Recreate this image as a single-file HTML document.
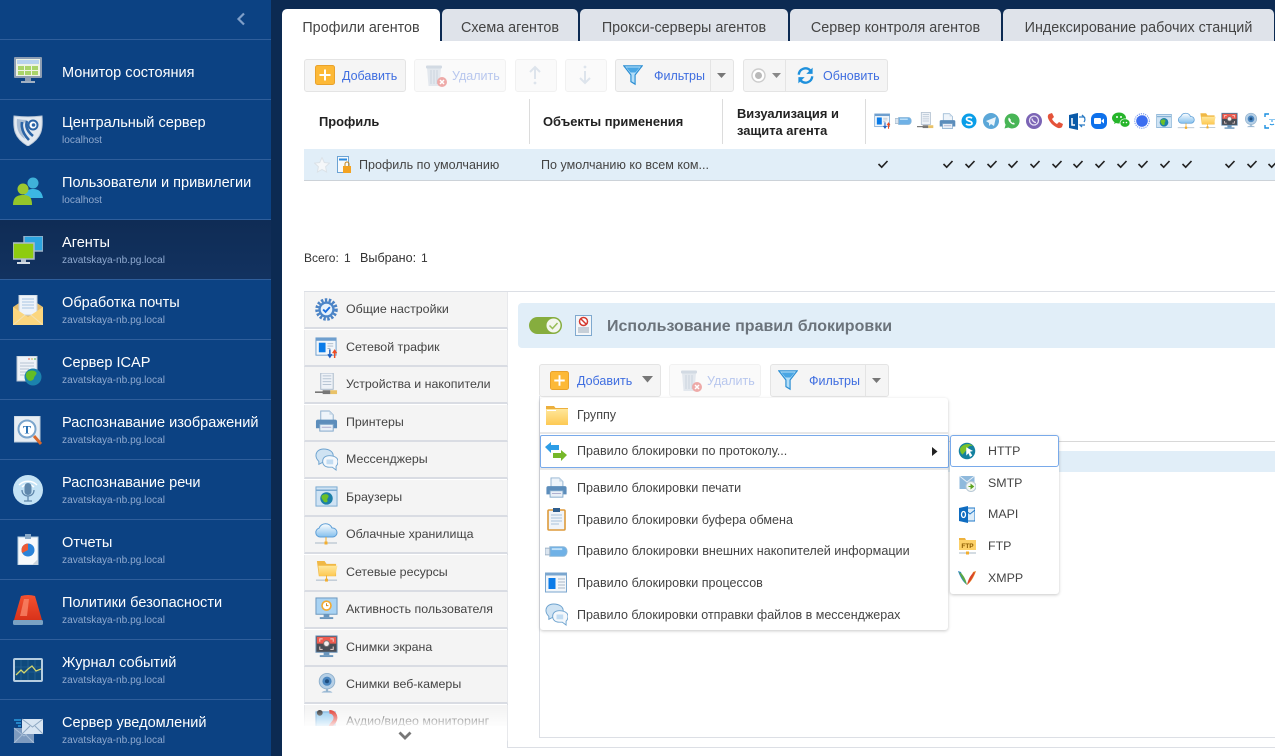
<!DOCTYPE html>
<html lang="ru"><head><meta charset="utf-8"><title>Агенты</title>
<style>
html,body{margin:0;padding:0}
body{width:1275px;height:756px;overflow:hidden;position:relative;background:#0c2a52;font-family:"Liberation Sans","DejaVu Sans",sans-serif;color:#444}
.a,.t,svg.i,.si{position:absolute}
.t{white-space:nowrap;line-height:20px}
.n{font-size:14.55px;color:#fff;left:62px;margin-top:2px}
.s{font-size:10.15px;color:#8fa9cf;left:62px;margin-top:2px}
.sep{position:absolute;left:0;width:271px;height:1px;background:#2f5e9b}
.tab{position:absolute;top:9px;height:32px;background:#dfe3ea;border-radius:5px 5px 0 0;text-align:center;font-size:14.35px;line-height:37px;padding-top:1px;box-sizing:border-box;color:#444;white-space:nowrap}
.btn{position:absolute;height:31px;background:#f5f5f5;border:1px solid #e4e4e4;border-radius:3px;box-sizing:content-box}
.dis{background:#fafafa;border-color:#f1f1f1}
.bl{color:#3f6ee0;font-size:12.5px;margin-top:1px}
.dt{color:#b8c7ee;font-size:12.5px;margin-top:1px}
.h{font-size:12.9px;font-weight:bold;color:#222;margin-top:2px}
.li{position:absolute;left:304px;width:202px;height:35px;background:#f4f4f4;border:1px solid #e8e9ec;border-bottom:2px solid #d9dce3;border-top:none;box-sizing:content-box}
.lt{left:346px;font-size:12.4px;color:#444}
.m{left:577px;font-size:12.55px;color:#444}
.c{position:absolute;top:158px;width:12px;height:12px}
</style></head><body>
<svg width="0" height="0" style="position:absolute">
<defs>
<linearGradient id="gc" x1="0" y1="0" x2="0" y2="1"><stop offset="0" stop-color="#fff"/><stop offset="1" stop-color="#84c0ee"/></linearGradient>
<linearGradient id="gy" x1="0" y1="0" x2="0" y2="1"><stop offset="0" stop-color="#ffe79b"/><stop offset="1" stop-color="#fdc954"/></linearGradient>
<linearGradient id="gr" x1="0" y1="0" x2="0" y2="1"><stop offset="0" stop-color="#f4512f"/><stop offset="1" stop-color="#d8321a"/></linearGradient>
<symbol id="plus" viewBox="0 0 20 20"><rect x=".5" y=".5" width="19" height="19" rx="2" fill="#fdb937" stroke="#e9a22b"/><path d="M10 4.500v11M4.500 10h11" stroke="#fff" stroke-width="2"/></symbol>
<symbol id="trash" viewBox="0 0 24 24"><path d="M3 5h14l-1.500 18H4.500z" fill="#e3e8ee"/><rect x="2" y="2.500" width="16" height="3" rx="1" fill="#d2dae3"/><path d="M7 7v14M10 7v14M13 7v14" stroke="#cbd4dd"/><circle cx="18" cy="19" r="5" fill="#eeaaa8"/><path d="M16 17l4 4M20 17l-4 4" stroke="#fff" stroke-width="1.500"/></symbol>
<symbol id="filter" viewBox="0 0 24 24"><path d="M1 1h22L14.500 12v11l-5-3v-8z" fill="#b3def8" stroke="#2b8ed3" stroke-width="1.400"/><path d="M4 3h16l-5 6H9z" fill="#49a6e4"/></symbol>
<symbol id="refresh" viewBox="0 0 24 24"><path d="M3.500 11A8.500 8.500 0 0 1 18 5.500" fill="none" stroke="#1e90dc" stroke-width="3"/><path d="M21 2v8h-8z" fill="#1e90dc"/><path d="M20.500 13A8.500 8.500 0 0 1 6 18.500" fill="none" stroke="#1e90dc" stroke-width="3"/><path d="M3 22v-8h8z" fill="#1e90dc"/></symbol>
<symbol id="traffic" viewBox="0 0 24 24"><rect x="1" y="2" width="21" height="18" fill="#f2f6fa" stroke="#6f9fce"/><rect x="1" y="2" width="21" height="3" fill="#6f9fce"/><rect x="4" y="7" width="7" height="10" fill="#0a7be8"/><path d="M13 8h6M13 10.500h6M13 13h3" stroke="#a9b8c8"/><path d="M15.500 14v7M13.500 19l2 3 2-3" stroke="#1d5fc0" stroke-width="1.500" fill="none"/><path d="M20.500 23v-7M18.500 18l2-3 2 3" stroke="#ee4b22" stroke-width="1.500" fill="none"/></symbol>
<symbol id="usb" viewBox="0 0 24 24"><path d="M5 7h14a4 5 0 0 1 0 10H5z" fill="#6fb1e6" stroke="#8bb7d9"/><rect x="0" y="8.500" width="5" height="7" fill="#dbe5ef" stroke="#9db2c6"/><path d="M7 9.500h11" stroke="#bfe0f8" stroke-width="2"/></symbol>
<symbol id="device" viewBox="0 0 24 24"><rect x="6" y="0" width="13" height="17" fill="#eef2f7" stroke="#a9b9ca"/><path d="M8 3h9M8 6h9M8 9h9M8 12h9" stroke="#b6c4d3"/><path d="M0 20h15" stroke="#666" stroke-width="1.500"/><rect x="8" y="18" width="8" height="4" fill="#777"/><rect x="16" y="18" width="7" height="4" fill="#e9c268"/></symbol>
<symbol id="printer" viewBox="0 0 24 24"><path d="M6 1h9l4 4v7H6z" fill="#eef4fa" stroke="#8fb0cf"/><path d="M15 1v4h4" fill="#c9d9e8"/><path d="M3 10h18a2 2 0 0 1 2 2v7h-4v-3H5v3H1v-7a2 2 0 0 1 2-2z" fill="#5c8dbb"/><rect x="5" y="15" width="14" height="7" fill="#e9f0f7" stroke="#7fa6ca"/><path d="M7 18h10" stroke="#aac"/></symbol>
<symbol id="msg" viewBox="0 0 24 24"><path d="M9 1C4 1 1 4 1 8c0 3 2 5 3 6l0 3 4-2h5c4 0 6-3 6-7s-4-7-10-7z" fill="#cfe3f3" stroke="#6ea3cf"/><path d="M15 8c-4 0-7 2-7 6s3 6 7 6h3l4 3v-4c1-1 2-3 2-5 0-4-4-6-9-6z" fill="#f4f8fc" stroke="#6ea3cf"/><rect x="12" y="12" width="7" height="5" fill="#c2dcf2"/></symbol>
<symbol id="browser" viewBox="0 0 24 24"><rect x="1" y="2" width="22" height="20" fill="#cfe3f4" stroke="#79a9d1"/><path d="M1 5.500h22" stroke="#79a9d1" stroke-width="1.500"/><circle cx="12" cy="14" r="6.500" fill="#1c7fa8"/><path d="M7 11c3-2 6-2 7 0s-2 3-1 5-3 3-4 1-3-3-2-6z" fill="#6cc027"/></symbol>
<symbol id="cloud" viewBox="0 0 24 24"><path d="M6 15a4.500 4.500 0 0 1-1-8.800A7 7 0 0 1 18 6a4.500 4.500 0 0 1 1 9z" fill="url(#gc)" stroke="#5f9fd6"/><path d="M1 21h22" stroke="#a8b8c6"/><path d="M12 15v5" stroke="#f1ab2e"/><rect x="10.500" y="19.500" width="3" height="3" fill="#f3ae2e"/></symbol>
<symbol id="fold" viewBox="0 0 24 24"><path d="M2 1h8l2 3h10v13H4z" fill="#f0b845"/><path d="M3.500 6h20L21 16.500H4.500z" fill="url(#gy)"/><path d="M1 21h22" stroke="#a8b8c6"/><path d="M12 16v4" stroke="#f1ab2e"/><rect x="10.500" y="19.500" width="3" height="3" fill="#f3ae2e"/></symbol>
<symbol id="act" viewBox="0 0 24 24"><rect x="1" y="1" width="22" height="17" fill="#a9d3f3" stroke="#6a96bd"/><circle cx="12" cy="9" r="5.500" fill="#f4a92e"/><circle cx="12" cy="9" r="3.800" fill="#fff"/><path d="M12 6.500V9h2" stroke="#d58a1a" fill="none"/><rect x="9" y="18" width="6" height="3" fill="#6a96bd"/><rect x="5" y="21" width="14" height="2" fill="#6a96bd"/></symbol>
<symbol id="scr" viewBox="0 0 24 24"><rect x="1" y="1" width="22" height="17" fill="#4a4d55" stroke="#668fb5"/><rect x="2" y="2" width="20" height="7" fill="#ef5b4f"/><path d="M5 12v3h3M19 12v3h-3M5 7V4h3M19 7V4h-3" stroke="#f4d6d0" fill="none"/><circle cx="12" cy="9" r="3" fill="#f6eeee" stroke="#777"/><rect x="9" y="18" width="6" height="3" fill="#6a96bd"/><rect x="5" y="21" width="14" height="2" fill="#6a96bd"/></symbol>
<symbol id="cam" viewBox="0 0 24 24"><circle cx="12" cy="9.500" r="8.500" fill="#b5cfe6" stroke="#8fb0cc"/><circle cx="12" cy="9.500" r="5" fill="#4a86c0"/><circle cx="12" cy="9.500" r="2.200" fill="#1e4d7e"/><path d="M6 22c2-3 10-3 12 0z" fill="#9fbcd6"/><path d="M12 18v3" stroke="#8fb0cc" stroke-width="2"/></symbol>
<symbol id="av" viewBox="0 0 24 24"><rect x="1" y="3" width="20" height="20" fill="#8cc8ef" stroke="#5a9bcf"/><circle cx="5" cy="4" r="3" fill="#333"/><path d="M15 3a6 6 0 0 1 6 8c-1 4-5 5-5 9" stroke="#e0342a" stroke-width="4" fill="none"/></symbol>
<symbol id="gear" viewBox="0 0 24 24"><circle cx="12" cy="12" r="10" fill="none" stroke="#4b83c5" stroke-width="3.500" stroke-dasharray="2.500 1.600"/><circle cx="12" cy="12" r="8.500" fill="#4d86c8"/><circle cx="12" cy="12" r="6" fill="#e8f2fb"/><path d="M8.500 12l2.500 2.500 4.500-5" stroke="#1a6fe0" stroke-width="2" fill="none"/></symbol>
<symbol id="globecur" viewBox="0 0 24 24"><circle cx="12" cy="12" r="11" fill="#14819f"/><path d="M3 8c4-6 12-7 17-3-3 0-6 0-7 3s-5 6-7 9c-2-2-4-5-3-9z" fill="#79c22a"/><path d="M11 7l9 5-4 1 3 5-3 2-2-5-3 3z" fill="#fff"/></symbol>
<symbol id="chk" viewBox="0 0 12 12"><path d="M1.500 6l3.200 3.200L10.500 3" fill="none" stroke="#222" stroke-width="1.600"/></symbol>
</defs></svg>

<!-- sidebar -->
<div class="a" style="left:0;top:0;width:271px;height:756px;background:#0c4283"></div>
<div class="a" style="left:0;top:220px;width:271px;height:59px;background:linear-gradient(#0f2c55,#123260)"></div>
<div class="sep" style="top:39px"></div><div class="sep" style="top:99px"></div><div class="sep" style="top:159px"></div><div class="sep" style="top:219px"></div><div class="sep" style="top:279px"></div><div class="sep" style="top:339px"></div><div class="sep" style="top:399px"></div><div class="sep" style="top:459px"></div><div class="sep" style="top:519px"></div><div class="sep" style="top:579px"></div><div class="sep" style="top:639px"></div><div class="sep" style="top:699px"></div>
<svg class="i" style="left:236px;top:12px" width="10" height="14" viewBox="0 0 10 14"><path d="M8 1.500L2.500 7 8 12.500" fill="none" stroke="#7f9fc9" stroke-width="2.200"/></svg>

<div class="t n" style="top:61px">Монитор состояния</div>
<div class="t n" style="top:111px">Центральный сервер</div><div class="t s" style="top:129px">localhost</div>
<div class="t n" style="top:171px">Пользователи и привилегии</div><div class="t s" style="top:189px">localhost</div>
<div class="t n" style="top:231px">Агенты</div><div class="t s" style="top:249px">zavatskaya-nb.pg.local</div>
<div class="t n" style="top:291px">Обработка почты</div><div class="t s" style="top:309px">zavatskaya-nb.pg.local</div>
<div class="t n" style="top:351px">Сервер ICAP</div><div class="t s" style="top:369px">zavatskaya-nb.pg.local</div>
<div class="t n" style="top:411px">Распознавание изображений</div><div class="t s" style="top:429px">zavatskaya-nb.pg.local</div>
<div class="t n" style="top:471px">Распознавание речи</div><div class="t s" style="top:489px">zavatskaya-nb.pg.local</div>
<div class="t n" style="top:531px">Отчеты</div><div class="t s" style="top:549px">zavatskaya-nb.pg.local</div>
<div class="t n" style="top:591px">Политики безопасности</div><div class="t s" style="top:609px">zavatskaya-nb.pg.local</div>
<div class="t n" style="top:651px">Журнал событий</div><div class="t s" style="top:669px">zavatskaya-nb.pg.local</div>
<div class="t n" style="top:711px">Сервер уведомлений</div><div class="t s" style="top:729px">zavatskaya-nb.pg.local</div>

<!-- sidebar icons -->
<svg class="i" style="left:14px;top:57px" width="28" height="27" viewBox="0 0 28 27"><rect x="0" y="0" width="28" height="21" rx="1" fill="#8d9db2"/><rect x="2" y="2" width="24" height="17" fill="#eef3e4"/><rect x="3" y="3" width="22" height="4" fill="#b8d3ee"/><path d="M4 9h6v4H4zM11 9h6v4h-6zM18 9h6v4h-6zM4 14h6v4H4zM11 14h6v4h-6zM18 14h6v4h-6z" fill="#a9d46a"/><rect x="11" y="21" width="6" height="3" fill="#8d9db2"/><rect x="7" y="24" width="14" height="2" fill="#a2b0c2"/></svg>
<svg class="i" style="left:13px;top:114px" width="30" height="32" viewBox="0 0 30 32"><path d="M1 2c8 1 20 1 28 0 1 13 0 22-14 30C1 24 0 15 1 2z" fill="#e3e9f0" stroke="#b9c6d6"/><path d="M4 5c4 .6 8 1 11 1-6 3-8 9-3 19C6 21 3 15 4 5z" fill="#a9bdd4"/><path d="M9 8c-1 7 2 13 7 18M14 7c-2 6 1 11 6 15" fill="none" stroke="#2b64a6" stroke-width="2.600"/><circle cx="20" cy="11" r="5.500" fill="#2b64a6"/><circle cx="20" cy="11" r="3.500" fill="#fff"/><circle cx="20.500" cy="11" r="1.800" fill="#2b64a6"/></svg>
<svg class="i" style="left:13px;top:177px" width="30" height="28" viewBox="0 0 30 28"><circle cx="20" cy="6" r="5.500" fill="#3fb1d9"/><path d="M11 21c0-6 3-9 9-9s9 3 10 9z" fill="#3cb7e3"/><circle cx="10" cy="12" r="5.500" fill="#9cc82f"/><path d="M0 28c0-7 3-10 10-10s9 3 9 10z" fill="#93c62a"/></svg>
<svg class="i" style="left:13px;top:236px" width="30" height="29" viewBox="0 0 30 29"><rect x="11" y="0" width="19" height="15" fill="#2ca5e0" stroke="#9db3c8" stroke-width="1.500"/><rect x="0" y="7" width="21" height="16" fill="#8ecc10" stroke="#aebdcb" stroke-width="1.500"/><rect x="8" y="23" width="5" height="3" fill="#b5c2cf"/><rect x="4" y="26" width="13" height="2" fill="#d5dde5"/></svg>
<svg class="i" style="left:13px;top:295px" width="30" height="30" viewBox="0 0 30 30"><path d="M0 12L15 2l15 10v18H0z" fill="#e5bd6c"/><rect x="6" y="0" width="18" height="20" fill="#eef3f9" stroke="#c6d0db"/><path d="M9 4h12M9 7h12M9 10h12M9 13h12" stroke="#a8c6e4"/><path d="M0 12l15 10 15-10v18H0z" fill="#fbd67f"/><path d="M0 30l12-10M30 30L18 20" stroke="#f1e2b6"/></svg>
<svg class="i" style="left:16px;top:356px" width="26" height="30" viewBox="0 0 26 30"><rect x="1" y="0" width="20" height="25" fill="#eef2f7" stroke="#b7c4d2"/><path d="M4 7h14M4 10h14M4 13h9M4 16h8M4 19h7" stroke="#b5c4d3"/><circle cx="13" cy="3" r="1" fill="#e98"/><circle cx="16" cy="3" r="1" fill="#dc8"/><circle cx="19" cy="3" r="1" fill="#8c8"/><circle cx="17" cy="21" r="8.500" fill="#1b82ad"/><path d="M11 16c3-2 7-2 9 0s-2 4-2 6-4 4-6 2-3-5-1-8z" fill="#63bd25"/></svg>
<svg class="i" style="left:14px;top:416px" width="28" height="29" viewBox="0 0 28 29"><rect x="0" y="0" width="26" height="26" fill="#e7edf3" stroke="#b9c9d8"/><circle cx="13" cy="13" r="8.500" fill="#fff" stroke="#7ba5cc" stroke-width="2"/><text x="13" y="17.500" text-anchor="middle" font-family="Liberation Serif" font-weight="bold" font-size="12" fill="#1f6ab0">T</text><path d="M20 20l7 8" stroke="#d9682c" stroke-width="3"/></svg>
<svg class="i" style="left:13px;top:475px" width="30" height="30" viewBox="0 0 30 30"><circle cx="15" cy="15" r="15" fill="#c3e2f5"/><path d="M6 10c5-5 13-5 18 0M9 12c3-3 9-3 12 0" fill="none" stroke="#fff" stroke-width="1.500"/><rect x="11.500" y="8" width="7" height="12" rx="3.500" fill="#5f87ab"/><path d="M9 15c0 8 12 8 12 0M15 21v5M11 26h8" stroke="#5f87ab" fill="none" stroke-width="1.300"/></svg>
<svg class="i" style="left:17px;top:534px" width="22" height="31" viewBox="0 0 22 31"><rect x="1" y="3" width="20" height="28" fill="#f7f9fb" stroke="#b5cde2"/><rect x="8" y="0" width="6" height="5" fill="#8aa9c7"/><circle cx="11" cy="16" r="6.500" fill="#2b83d8"/><path d="M11 16V9.500A6.500 6.500 0 0 0 5.200 19z" fill="#ef5b34"/><path d="M15 31l6-6v6z" fill="#c9d3dc"/></svg>
<svg class="i" style="left:13px;top:595px" width="30" height="30" viewBox="0 0 30 30"><path d="M8 1q7-2 14 0l7 24H1z" fill="url(#gr)"/><path d="M11 4h5l-2 17H7z" fill="#f98a6c" opacity=".75"/><rect x="0" y="25" width="30" height="5" rx="1.500" fill="#7aa1c2"/></svg>
<svg class="i" style="left:13px;top:658px" width="30" height="24" viewBox="0 0 30 24"><rect x="1" y="1" width="28" height="22" rx="1" fill="#0f4a7d" stroke="#b6cde0" stroke-width="2"/><path d="M2 14h26M2 9h26M8 2v20M15 2v20M22 2v20" stroke="#2e6a9d" stroke-width=".6"/><path d="M3 17l5-5 3 3 4-4 4-3 4 5 5-2" fill="none" stroke="#d4d66a" stroke-width="1.300"/></svg>
<svg class="i" style="left:13px;top:718px" width="30" height="25" viewBox="0 0 30 25"><rect x="1" y="10" width="20" height="15" fill="#7e9bbf"/><path d="M1 10l10 8 10-8M1 25l8-8M21 25l-8-8" stroke="#a7bdd6" fill="none"/><rect x="9" y="1" width="21" height="15" fill="#d8e5f2"/><path d="M9 1l10.500 8L30 1M9 16l8-8M30 16l-8-8" stroke="#8ea8c3" fill="none"/><path d="M1 2h7M3 5h5M5 8h3" stroke="#2c9be0" stroke-width="1.500"/></svg>

<!-- main -->
<div class="a" style="left:282px;top:41px;width:993px;height:715px;background:#fff"></div>
<div class="tab" style="left:282px;width:158px;background:#fff">Профили агентов</div>
<div class="tab" style="left:442px;width:136px">Схема агентов</div>
<div class="tab" style="left:580px;width:208px">Прокси-серверы агентов</div>
<div class="tab" style="left:790px;width:211px">Сервер контроля агентов</div>
<div class="tab" style="left:1003px;width:271px">Индексирование рабочих станций</div>

<!-- toolbar 1 -->
<div class="btn" style="left:304px;top:59px;width:100px"></div>
<svg class="i" style="left:315px;top:65px" width="20" height="20"><use href="#plus"/></svg>
<div class="t bl" style="left:342px;top:65px">Добавить</div>
<div class="btn dis" style="left:414px;top:59px;width:90px"></div>
<svg class="i" style="left:424px;top:63px" width="24" height="24"><use href="#trash"/></svg>
<div class="t dt" style="left:452px;top:65px">Удалить</div>
<div class="btn dis" style="left:515px;top:59px;width:40px"></div>
<svg class="i" style="left:527px;top:65px" width="16" height="20" viewBox="0 0 16 20"><path d="M8 2v12M3 7l5-5 5 5" fill="none" stroke="#dde4ec" stroke-width="2"/><circle cx="8" cy="18" r="1.400" fill="#dde4ec"/></svg>
<div class="btn dis" style="left:565px;top:59px;width:40px"></div>
<svg class="i" style="left:577px;top:65px" width="16" height="20" viewBox="0 0 16 20"><circle cx="8" cy="2" r="1.400" fill="#dde4ec"/><path d="M8 6v12M3 13l5 5 5-5" fill="none" stroke="#dde4ec" stroke-width="2"/></svg>
<div class="btn" style="left:615px;top:59px;width:117px"></div>
<div class="a" style="left:710px;top:60px;width:1px;height:31px;background:#e4e4e4"></div>
<svg class="i" style="left:623px;top:63px" width="20" height="24"><use href="#filter"/></svg>
<div class="t bl" style="left:654px;top:65px">Фильтры</div>
<svg class="i" style="left:717px;top:73px" width="9" height="6"><path d="M0 0h9L4.500 5z" fill="#777"/></svg>
<div class="btn" style="left:743px;top:59px;width:143px"></div>
<div class="a" style="left:785px;top:60px;width:1px;height:31px;background:#e4e4e4"></div>
<svg class="i" style="left:751px;top:68px" width="15" height="15" viewBox="0 0 15 15"><circle cx="7.500" cy="7.500" r="6.500" fill="#fff" stroke="#ccc" stroke-width="1.400"/><circle cx="7.500" cy="7.500" r="3.500" fill="#b9b9b9"/></svg>
<svg class="i" style="left:772px;top:73px" width="9" height="6"><path d="M0 0h9L4.500 5z" fill="#888"/></svg>
<svg class="i" style="left:796px;top:66px" width="19" height="19"><use href="#refresh"/></svg>
<div class="t bl" style="left:823px;top:65px">Обновить</div>

<!-- table header -->
<div class="a" style="left:529px;top:99px;width:1px;height:45px;background:#dcdcdc"></div>
<div class="a" style="left:722px;top:99px;width:1px;height:45px;background:#dcdcdc"></div>
<div class="a" style="left:865px;top:99px;width:1px;height:45px;background:#dcdcdc"></div>
<div class="t h" style="left:319px;top:110px">Профиль</div>
<div class="t h" style="left:543px;top:110px">Объекты применения</div>
<div class="t h" style="left:737px;top:102px">Визуализация и</div>
<div class="t h" style="left:737px;top:119px">защита агента</div>

<!-- header icons -->
<svg class="i" style="left:874px;top:112px" width="17" height="18"><use href="#traffic"/></svg>
<svg class="i" style="left:895px;top:112px" width="17" height="18"><use href="#usb"/></svg>
<svg class="i" style="left:917px;top:112px" width="17" height="18"><use href="#device"/></svg>
<svg class="i" style="left:939px;top:113px" width="17" height="17"><use href="#printer"/></svg>
<svg class="i" style="left:961px;top:113px" width="16" height="16" viewBox="0 0 16 16"><circle cx="8" cy="8" r="7.500" fill="#0a9ee8"/><path d="M11 5.200C9.500 3.800 5.500 4 5.500 6c0 2.500 5.500 1.500 5.500 4.200 0 2-4.300 2.300-6 .7" fill="none" stroke="#fff" stroke-width="1.700"/></svg>
<svg class="i" style="left:983px;top:113px" width="16" height="16" viewBox="0 0 16 16"><circle cx="8" cy="8" r="8" fill="#5ba7d8"/><path d="M3 8l10-4-2 9-3-2-2 2v-3z" fill="#e9f4fb"/></svg>
<svg class="i" style="left:1004px;top:113px" width="16" height="16" viewBox="0 0 16 16"><path d="M8 .5a7.500 7.500 0 0 0-6.400 11.300L.5 15.500l3.800-1A7.500 7.500 0 1 0 8 .5z" fill="#48b556"/><path d="M5 4.500c-1 1-1 3 1 5s4 2.500 5 1.500l-1.500-1.500-1 .5-2-2 .5-1z" fill="#fff"/></svg>
<svg class="i" style="left:1026px;top:113px" width="16" height="16" viewBox="0 0 16 16"><circle cx="8" cy="8" r="8" fill="#7b64b5"/><circle cx="8" cy="7.500" r="4.500" fill="none" stroke="#e8e2f5" stroke-width="1.300"/><path d="M6 5.500c0 2 2 4 4 4" stroke="#e8e2f5" fill="none" stroke-width="1.300"/></svg>
<svg class="i" style="left:1047px;top:113px" width="16" height="16" viewBox="0 0 16 16"><path d="M2 1l3-1 2 4-2 2c1 2 3 4 5 5l2-2 4 2-1 3c-1 1-3 2-6 0C5 12 2 8 1 5c-.5-2 0-3 1-4z" fill="#e4533a"/></svg>
<svg class="i" style="left:1069px;top:113px" width="17" height="17" viewBox="0 0 17 17"><path d="M0 2l9-2v17l-9-2z" fill="#0a5aa8"/><path d="M3 5v7h3" stroke="#fff" fill="none" stroke-width="1.500"/><path d="M10 4h5l-2-2M16 12h-5l2 2M15 4a4 4 0 0 1 0 5" stroke="#2a7bc4" fill="none" stroke-width="1.300"/></svg>
<svg class="i" style="left:1091px;top:113px" width="16" height="16" viewBox="0 0 16 16"><rect width="16" height="16" rx="6" fill="#0e71eb"/><rect x="3" y="5" width="7" height="6" rx="1" fill="#fff"/><path d="M10.500 7.500L13 5.500v5l-2.500-2z" fill="#fff"/></svg>
<svg class="i" style="left:1112px;top:112px" width="18" height="17" viewBox="0 0 18 17"><ellipse cx="7" cy="6" rx="7" ry="5.500" fill="#27b52b"/><path d="M3 9l-1 3 4-2z" fill="#27b52b"/><ellipse cx="13" cy="11" rx="5" ry="4.200" fill="#27b52b" stroke="#fff" stroke-width=".7"/><circle cx="5" cy="5" r="1" fill="#fff"/><circle cx="9" cy="5" r="1" fill="#fff"/><circle cx="11.500" cy="10.500" r=".8" fill="#fff"/><circle cx="14.500" cy="10.500" r=".8" fill="#fff"/></svg>
<svg class="i" style="left:1134px;top:113px" width="16" height="16" viewBox="0 0 16 16"><circle cx="8" cy="8" r="7.300" fill="none" stroke="#6b8ee8" stroke-dasharray="1.200 1"/><circle cx="8" cy="8" r="5.800" fill="#3b6df0"/></svg>
<svg class="i" style="left:1156px;top:113px" width="16" height="16"><use href="#browser"/></svg>
<svg class="i" style="left:1177px;top:112px" width="18" height="18"><use href="#cloud"/></svg>
<svg class="i" style="left:1199px;top:112px" width="17" height="18"><use href="#fold"/></svg>
<svg class="i" style="left:1221px;top:112px" width="17" height="18"><use href="#scr"/></svg>
<svg class="i" style="left:1243px;top:112px" width="16" height="17"><use href="#cam"/></svg>
<svg class="i" style="left:1264px;top:113px" width="16" height="16" viewBox="0 0 16 16"><path d="M1 4V1h4M11 1h4v3M15 12v3h-4M5 15H1v-3" fill="none" stroke="#1a8fe0" stroke-width="1.400"/><path d="M6 6v1M10 6v1M8 6v3M6 11c1 1 3 1 4 0" stroke="#1a8fe0" fill="none"/></svg>

<!-- row -->
<div class="a" style="left:304px;top:149px;width:971px;height:31px;background:#e1eef8;border-bottom:1px solid #ccd2d8"></div>
<svg class="i" style="left:314px;top:157px" width="16" height="16" viewBox="0 0 16 16"><path d="M8 .5l2.300 5 5.200.6-3.900 3.600 1 5.300L8 12.400 3.400 15l1-5.300L.5 6.100l5.200-.6z" fill="#f5f7f9" stroke="#dbe2e8"/></svg>
<svg class="i" style="left:337px;top:156px" width="15" height="18" viewBox="0 0 15 18"><rect x=".5" y=".5" width="11" height="16" fill="#f7fafc" stroke="#6ca3d4"/><rect x="2" y="2.500" width="8" height="2" fill="#2a8ae0"/><rect x="6" y="10" width="8" height="7" fill="#f3a322"/><path d="M8 10V8a2 2 0 0 1 4 0v2" fill="none" stroke="#c4851c"/></svg>
<div class="t" style="left:359px;top:155px;font-size:12.55px;color:#444">Профиль по умолчанию</div>
<div class="t" style="left:541px;top:155px;font-size:12.55px;color:#444">По умолчанию ко всем ком...</div>

<!-- checks -->
<svg class="c" style="left:877px"><use href="#chk"/></svg>
<svg class="c" style="left:942px"><use href="#chk"/></svg>
<svg class="c" style="left:964px"><use href="#chk"/></svg>
<svg class="c" style="left:986px"><use href="#chk"/></svg>
<svg class="c" style="left:1007px"><use href="#chk"/></svg>
<svg class="c" style="left:1029px"><use href="#chk"/></svg>
<svg class="c" style="left:1051px"><use href="#chk"/></svg>
<svg class="c" style="left:1072px"><use href="#chk"/></svg>
<svg class="c" style="left:1094px"><use href="#chk"/></svg>
<svg class="c" style="left:1116px"><use href="#chk"/></svg>
<svg class="c" style="left:1137px"><use href="#chk"/></svg>
<svg class="c" style="left:1159px"><use href="#chk"/></svg>
<svg class="c" style="left:1181px"><use href="#chk"/></svg>
<svg class="c" style="left:1224px"><use href="#chk"/></svg>
<svg class="c" style="left:1246px"><use href="#chk"/></svg>
<svg class="c" style="left:1267px"><use href="#chk"/></svg>

<div class="t" style="left:304px;top:248px;font-size:12px;color:#333">Всего:</div>
<div class="t" style="left:344px;top:248px;font-size:12px;color:#333">1</div>
<div class="t" style="left:360px;top:248px;font-size:12.6px;color:#333">Выбрано:</div>
<div class="t" style="left:421px;top:248px;font-size:12px;color:#333">1</div>

<!-- lower area -->
<div class="a" style="left:304px;top:291px;width:971px;height:1px;background:#dcdfe5"></div>
<div class="a" style="left:507px;top:291px;width:1px;height:457px;background:#dcdfe5"></div>
<div class="a" style="left:507px;top:747px;width:768px;height:1px;background:#dcdfe5"></div>

<div class="li" style="top:292px"></div><div class="li" style="top:329.500px"></div><div class="li" style="top:367px"></div><div class="li" style="top:404.500px"></div><div class="li" style="top:442px"></div><div class="li" style="top:479.500px"></div><div class="li" style="top:517px"></div><div class="li" style="top:554.500px"></div><div class="li" style="top:592px"></div><div class="li" style="top:629.500px"></div><div class="li" style="top:667px"></div><div class="li" style="top:704.500px"></div>

<svg class="si" style="left:315px;top:298px" width="23" height="23"><use href="#gear"/></svg>
<svg class="si" style="left:315px;top:336px" width="23" height="23"><use href="#traffic"/></svg>
<svg class="si" style="left:315px;top:373px" width="23" height="23"><use href="#device"/></svg>
<svg class="si" style="left:315px;top:410px" width="23" height="23"><use href="#printer"/></svg>
<svg class="si" style="left:315px;top:448px" width="23" height="23"><use href="#msg"/></svg>
<svg class="si" style="left:315px;top:485px" width="23" height="23"><use href="#browser"/></svg>
<svg class="si" style="left:314px;top:522px" width="24" height="24"><use href="#cloud"/></svg>
<svg class="si" style="left:315px;top:560px" width="23" height="23"><use href="#fold"/></svg>
<svg class="si" style="left:315px;top:597px" width="23" height="23"><use href="#act"/></svg>
<svg class="si" style="left:315px;top:635px" width="23" height="23"><use href="#scr"/></svg>
<svg class="si" style="left:316px;top:672px" width="22" height="23"><use href="#cam"/></svg>
<svg class="si" style="left:315px;top:709px" width="23" height="23"><use href="#av"/></svg>

<div class="t lt" style="top:299px">Общие настройки</div>
<div class="t lt" style="top:337px">Сетевой трафик</div>
<div class="t lt" style="top:374px">Устройства и накопители</div>
<div class="t lt" style="top:412px">Принтеры</div>
<div class="t lt" style="top:449px">Мессенджеры</div>
<div class="t lt" style="top:487px">Браузеры</div>
<div class="t lt" style="top:524px">Облачные хранилища</div>
<div class="t lt" style="top:562px">Сетевые ресурсы</div>
<div class="t lt" style="top:599px">Активность пользователя</div>
<div class="t lt" style="top:637px">Снимки экрана</div>
<div class="t lt" style="top:674px">Снимки веб-камеры</div>
<div class="t lt" style="top:711px">Аудио/видео мониторинг</div>
<div class="a" style="left:304px;top:708px;width:203px;height:18px;background:linear-gradient(rgba(255,255,255,0),rgba(255,255,255,.85))"></div>
<div class="a" style="left:304px;top:726px;width:203px;height:30px;background:#fff"></div>
<svg class="i" style="left:398px;top:731px" width="14" height="10" viewBox="0 0 14 10"><path d="M1.500 1.500L7 7l5.500-5.500" fill="none" stroke="#777" stroke-width="2.800"/></svg>

<!-- right panel -->
<div class="a" style="left:518px;top:303px;width:757px;height:45px;background:#e1eef8;border-radius:4px 0 0 4px"></div>
<svg class="i" style="left:529px;top:317px" width="33" height="17" viewBox="0 0 33 17"><rect width="33" height="17" rx="8.500" fill="#86ad3e"/><circle cx="24.500" cy="8.500" r="7" fill="#f3f6ee"/><path d="M20.500 8.500l3 3 5-5.500" fill="none" stroke="#98bd58" stroke-width="1.500"/></svg>
<svg class="i" style="left:575px;top:315px" width="17" height="21" viewBox="0 0 17 21"><rect x=".5" y=".5" width="16" height="20" fill="#f3f6f9" stroke="#7fa9cf"/><circle cx="8.500" cy="6.500" r="4" fill="#fff" stroke="#d43a30" stroke-width="1.500"/><path d="M6 4l5 5" stroke="#d43a30" stroke-width="1.500"/><path d="M3 13h11M3 15h11M3 17h11" stroke="#9aa8b6"/></svg>
<div class="t" style="left:607px;top:317px;font-size:16px;font-weight:bold;color:#6b737b">Использование правил блокировки</div>

<div class="btn" style="left:539px;top:364px;width:120px"></div>
<svg class="i" style="left:550px;top:371px" width="19" height="19"><use href="#plus"/></svg>
<div class="t bl" style="left:577px;top:370px">Добавить</div>
<svg class="i" style="left:642px;top:376px" width="11" height="7"><path d="M0 0h11L5.500 6.500z" fill="#777"/></svg>
<div class="btn dis" style="left:669px;top:364px;width:90px"></div>
<svg class="i" style="left:679px;top:368px" width="24" height="24"><use href="#trash"/></svg>
<div class="t dt" style="left:707px;top:370px">Удалить</div>
<div class="btn" style="left:770px;top:364px;width:117px"></div>
<div class="a" style="left:865px;top:365px;width:1px;height:31px;background:#e4e4e4"></div>
<svg class="i" style="left:778px;top:368px" width="20" height="24"><use href="#filter"/></svg>
<div class="t bl" style="left:809px;top:370px">Фильтры</div>
<svg class="i" style="left:872px;top:378px" width="9" height="6"><path d="M0 0h9L4.500 5z" fill="#777"/></svg>

<div class="a" style="left:539px;top:396px;width:1px;height:341px;background:#dcdfe5"></div>
<div class="a" style="left:539px;top:737px;width:736px;height:1px;background:#dcdfe5"></div>
<div class="a" style="left:948px;top:441px;width:327px;height:1px;background:#d8d8d8"></div>
<div class="a" style="left:948px;top:451px;width:327px;height:21px;background:#e1eef8"></div>

<!-- menu -->
<div class="a" style="left:540px;top:398px;width:408px;height:232px;background:#fff;border-radius:3px;box-shadow:0 1px 3px rgba(0,0,0,.22)"></div>
<div class="a" style="left:540px;top:432px;width:408px;height:2px;background:#e8e8e8"></div>
<div class="a" style="left:540px;top:468px;width:408px;height:2px;background:#e8e8e8"></div>
<div class="a" style="left:540px;top:435px;width:407px;height:31px;border:1px solid #79aaea;border-radius:2px;background:#fff"></div>
<svg class="i" style="left:546px;top:405px" width="22" height="20" viewBox="0 0 22 20"><path d="M0 1h8l1.500 2H22v17H0z" fill="#ecaf3d"/><rect x="0" y="4" width="22" height="16" fill="url(#gy)"/><path d="M1 5.500h9" stroke="#fff"/></svg>
<div class="t m" style="top:405px">Группу</div>
<svg class="i" style="left:545px;top:441px" width="23" height="21" viewBox="0 0 23 21"><path d="M0 6l6-5v3h8v5H6v3z" fill="#2d9de6"/><path d="M22 14l-6 6v-3H8v-5h8V9z" fill="#76b82a"/></svg>
<div class="t m" style="top:441px">Правило блокировки по протоколу...</div>
<svg class="i" style="left:932px;top:447px" width="6" height="9"><path d="M0 0l5.500 4.500L0 9z" fill="#222"/></svg>
<svg class="i" style="left:545px;top:477px" width="23" height="22"><use href="#printer"/></svg>
<div class="t m" style="top:478px">Правило блокировки печати</div>
<svg class="i" style="left:547px;top:508px" width="19" height="23" viewBox="0 0 19 23"><rect x="1" y="2" width="17" height="20" rx="1" fill="#f0f4f9" stroke="#dd9a3a" stroke-width="1.600"/><rect x="6" y="0" width="7" height="4" fill="#2f5d8c"/><path d="M4 7h11M4 10h11M4 13h11M4 16h8" stroke="#a9c2da"/></svg>
<div class="t m" style="top:510px">Правило блокировки буфера обмена</div>
<svg class="i" style="left:545px;top:540px" width="23" height="23"><use href="#usb"/></svg>
<div class="t m" style="top:541px;font-size:12.6px">Правило блокировки внешних накопителей информации</div>
<svg class="i" style="left:545px;top:572px" width="23" height="22" viewBox="0 0 23 22"><rect x=".5" y="1" width="21" height="19" fill="#f2f6fa" stroke="#7aa6cf"/><path d="M.5 2.500h21" stroke="#7aa6cf" stroke-width="2"/><rect x="3.500" y="6" width="7" height="11" fill="#0a7be8"/><path d="M13 7h7M13 10h7M13 13h7M13 16h7" stroke="#a9b8c8"/></svg>
<div class="t m" style="top:573px">Правило блокировки процессов</div>
<svg class="i" style="left:545px;top:603px" width="23" height="23"><use href="#msg"/></svg>
<div class="t m" style="top:605px;font-size:12.5px">Правило блокировки отправки файлов в мессенджерах</div>

<!-- submenu -->
<div class="a" style="left:950px;top:435px;width:109px;height:159px;background:#fff;border-radius:3px;box-shadow:0 1px 3px rgba(0,0,0,.22)"></div>
<div class="a" style="left:950px;top:435px;width:107px;height:30px;border:1px solid #79aaea;border-radius:3px;background:#fff"></div>
<svg class="i" style="left:958px;top:442px" width="18" height="18"><use href="#globecur"/></svg>
<div class="t" style="left:988px;top:441px;font-size:12.4px;color:#444">HTTP</div>
<svg class="i" style="left:959px;top:474px" width="17" height="18" viewBox="0 0 17 18"><rect x=".5" y="2" width="15" height="13" fill="#8fb9dc"/><path d="M.5 2l7.500 6 7.500-6" stroke="#e4eef7" fill="none"/><circle cx="12" cy="12.500" r="5" fill="#f3f7f2" stroke="#b9c9d6"/><path d="M9.500 12.500h4M12 10.500l2.500 2-2.500 2z" stroke="#5ba31e" fill="#5ba31e"/></svg>
<div class="t" style="left:988px;top:473px;font-size:12.4px;color:#444">SMTP</div>
<svg class="i" style="left:959px;top:506px" width="16" height="17" viewBox="0 0 16 17"><rect x="6" y="2" width="10" height="13" fill="#dcecf9" stroke="#1f78c8"/><path d="M6 4l5 4 5-4" stroke="#1f78c8" fill="none"/><path d="M0 2l9-2v17l-9-2z" fill="#0f6cc0"/><ellipse cx="4.500" cy="8.500" rx="2" ry="3" fill="none" stroke="#fff" stroke-width="1.300"/></svg>
<div class="t" style="left:988px;top:504px;font-size:12.4px;color:#444">MAPI</div>
<svg class="i" style="left:959px;top:537px" width="17" height="18" viewBox="0 0 17 18"><path d="M0 1h6l1 2h10v10H0z" fill="#eeb23e"/><rect x="0" y="3" width="17" height="10" fill="#fdd169"/><text x="8.500" y="11" text-anchor="middle" font-family="Liberation Sans" font-weight="bold" font-size="6.500" fill="#8a5a00">FTP</text><path d="M0 16h17" stroke="#a8b8c6"/><rect x="7" y="14.500" width="3" height="3" fill="#f3ae2e"/></svg>
<div class="t" style="left:988px;top:536px;font-size:12.4px;color:#444">FTP</div>
<svg class="i" style="left:958px;top:570px" width="18" height="16" viewBox="0 0 18 16"><path d="M0 1c2 6 5 11 9 14C6 10 4 5 3 2z" fill="#2e86c9"/><path d="M1 2c2 5 5 10 8 13-1-5-3-9-6-12z" fill="#5aa845"/><path d="M18 1c-2 6-5 11-9 14 3-5 5-10 6-13z" fill="#e8821e"/><path d="M17 2c-2 5-5 10-8 13 1-5 3-9 6-12z" fill="#d9452b"/></svg>
<div class="t" style="left:988px;top:568px;font-size:12.4px;color:#444">XMPP</div>
</body></html>
